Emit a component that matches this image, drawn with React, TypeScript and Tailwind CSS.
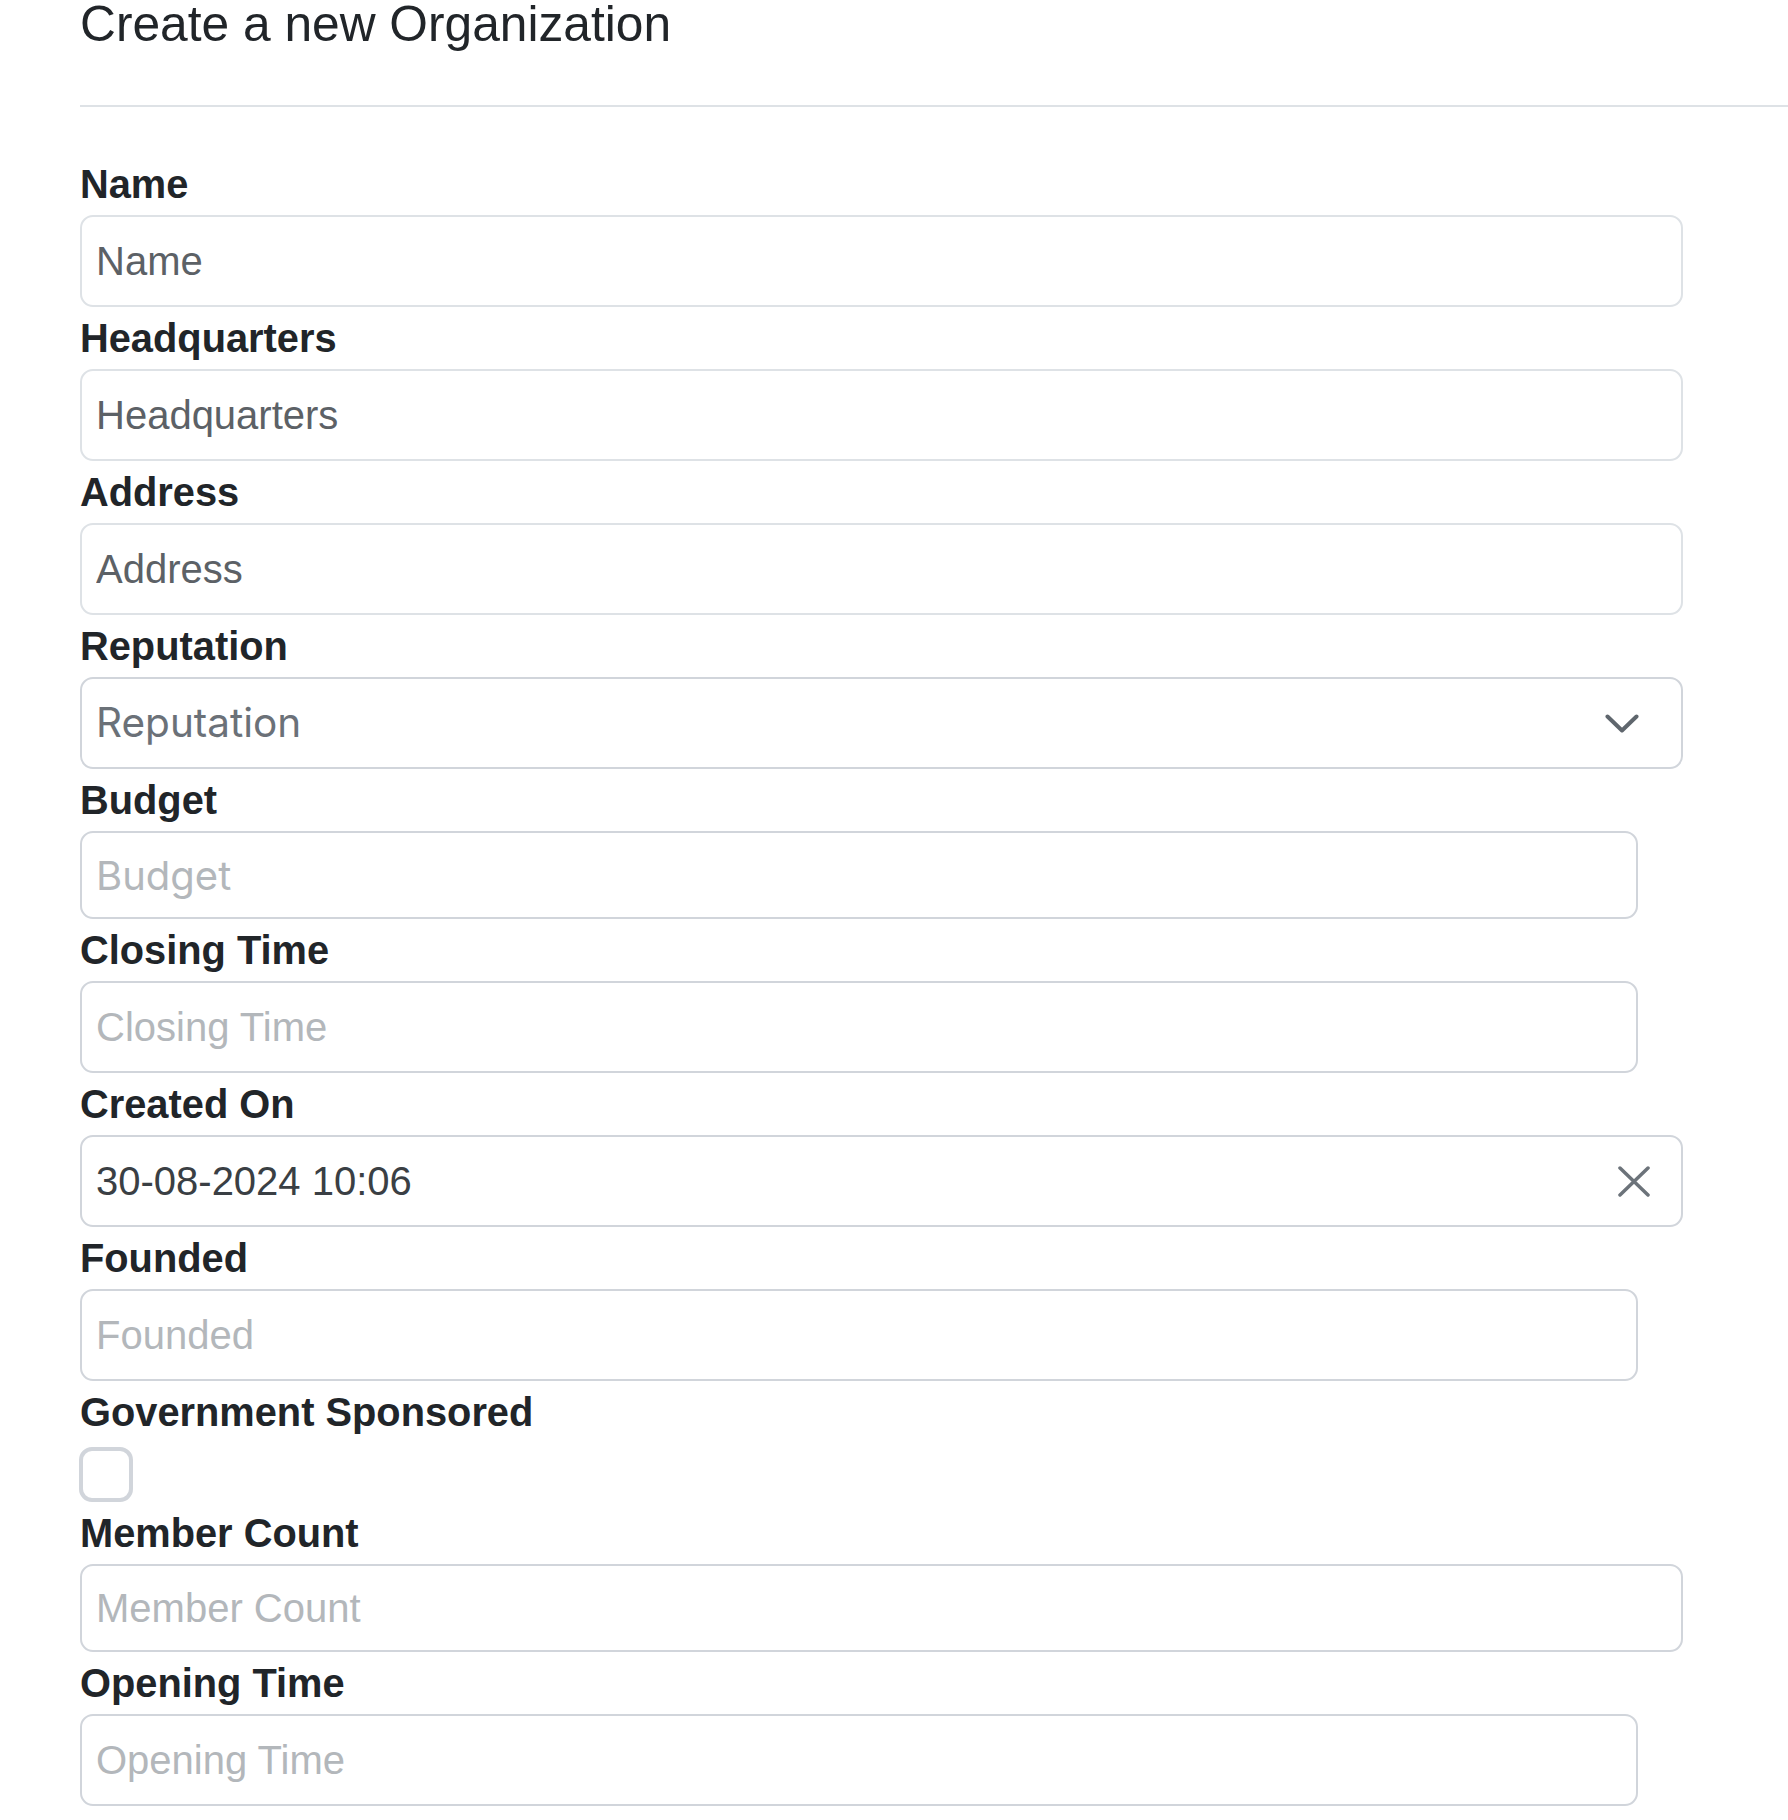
import React from 'react'

const arial = "font-['Liberation_Sans',Arial,sans-serif]"

type Field = {
  label: string
  kind: 'text' | 'select' | 'date' | 'checkbox'
  wide?: boolean
  tall?: boolean
  tone?: 'dark' | 'light'
  font?: 'arial' | 'inter'
  value?: string
}

const fields: Field[] = [
  { label: 'Name', kind: 'text', wide: true, tall: true, tone: 'dark', font: 'arial' },
  { label: 'Headquarters', kind: 'text', wide: true, tall: true, tone: 'dark', font: 'arial' },
  { label: 'Address', kind: 'text', wide: true, tall: true, tone: 'dark', font: 'arial' },
  { label: 'Reputation', kind: 'select' },
  { label: 'Budget', kind: 'text', tone: 'light', font: 'inter' },
  { label: 'Closing Time', kind: 'text', tall: true, tone: 'light', font: 'arial' },
  { label: 'Created On', kind: 'date', value: '30-08-2024 10:06' },
  { label: 'Founded', kind: 'text', tall: true, tone: 'light', font: 'arial' },
  { label: 'Government Sponsored', kind: 'checkbox' },
  { label: 'Member Count', kind: 'text', wide: true, tone: 'light', font: 'arial' },
  { label: 'Opening Time', kind: 'text', tall: true, tone: 'light', font: 'arial' },
]

function Label({ children }: { children: React.ReactNode }) {
  return (
    <label className={`block h-[62px] text-[39.8px] font-bold leading-[62px] text-[#212529] ${arial}`}>
      {children}
    </label>
  )
}

function Control({ field }: { field: Field }) {
  if (field.kind === 'checkbox') {
    return (
      <input
        type="checkbox"
        className="mt-[4px] ml-[-1px] block h-[55px] w-[54px] appearance-none rounded-[13px] border-4 border-[#d1d5db] bg-white"
      />
    )
  }

  if (field.kind === 'select') {
    return (
      <div className="flex h-[92px] w-[1603px] items-center justify-between rounded-[13px] border-2 border-[#d1d5db] bg-white pl-[14px] pr-[42px]">
        <span className="font-['Inter',sans-serif] text-[40.5px] text-[#6b7178]">Reputation</span>
        <svg width="34" height="19" viewBox="0 0 34 19" fill="none">
          <polyline points="2.5,2.5 17,16.5 31.5,2.5" stroke="#5f666d" strokeWidth="4" strokeLinecap="round" strokeLinejoin="round" />
        </svg>
      </div>
    )
  }

  if (field.kind === 'date') {
    return (
      <div className="flex h-[92px] w-[1603px] items-center justify-between rounded-[13px] border-2 border-[#d1d5db] bg-white pl-[14px] pr-[31px]">
        <span className={`text-[40px] text-[#3a3f44] ${arial}`}>{field.value}</span>
        <svg width="32" height="31" viewBox="0 0 32 31" fill="none">
          <path d="M2 2 L30 29 M30 2 L2 29" stroke="#6c737a" strokeWidth="3.5" strokeLinecap="round" />
        </svg>
      </div>
    )
  }

  const width = field.wide ? 'w-[1603px]' : 'w-[1558px]'
  const height = field.tall ? 'h-[92px]' : 'h-[88px]'
  const border = field.tone === 'dark' ? 'border-[#dee2e6]' : 'border-[#d1d5db]'
  const placeholder = field.tone === 'dark' ? 'placeholder:text-[#5c6166]' : 'placeholder:text-[#b3b7bb]'
  const font = field.font === 'inter' ? "font-['Inter',sans-serif]" : arial

  return (
    <input
      type="text"
      placeholder={field.label}
      className={`block ${width} ${height} rounded-[13px] border-2 ${border} bg-white px-[14px] text-[40px] text-[#212529] outline-none ${placeholder} ${font}`}
    />
  )
}

export default function App() {
  return (
    <div className="min-h-screen overflow-hidden bg-white pl-[80px]">
      <h1 className={`text-[49.7px] font-normal leading-[48px] text-[#212529] ${arial}`}>
        Create a new Organization
      </h1>
      <div className="mt-[57px] h-[2px] w-full bg-[#dee2e6]" />

      <form className="mt-[46px] flex flex-col">
        {fields.map((field) => (
          <div key={field.label}>
            <Label>{field.label}</Label>
            <Control field={field} />
          </div>
        ))}
      </form>
    </div>
  )
}
